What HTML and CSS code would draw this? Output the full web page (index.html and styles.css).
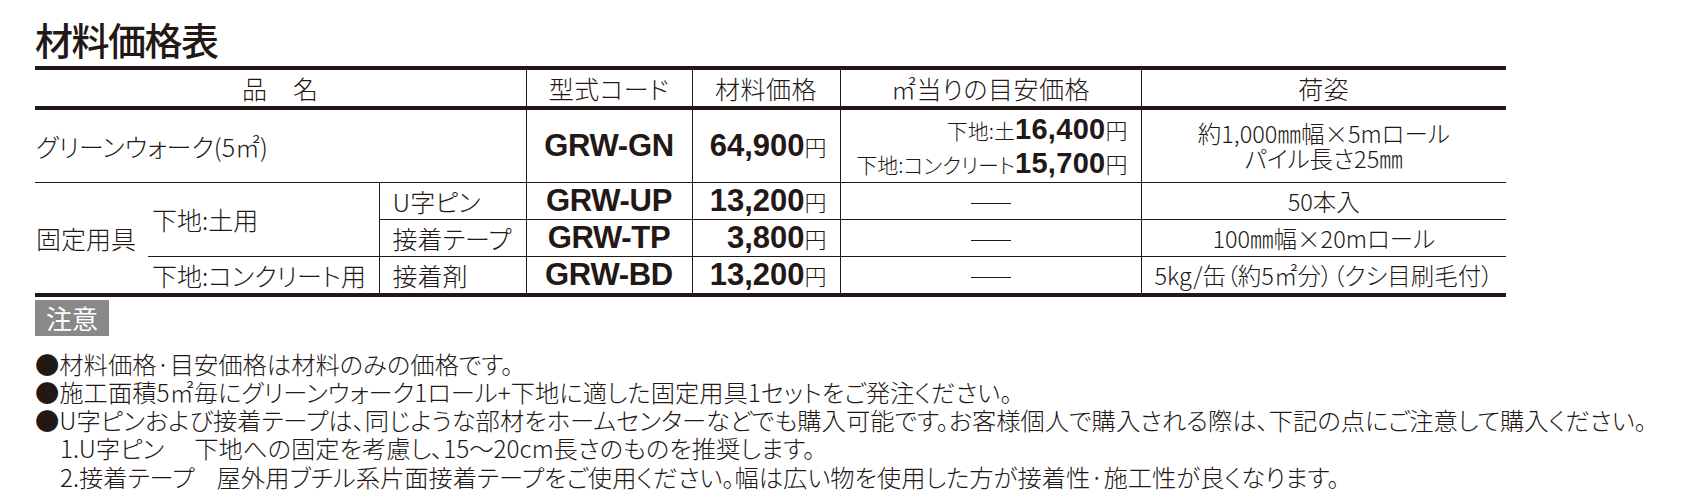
FILE: index.html
```html
<!DOCTYPE html>
<html lang="ja">
<head>
<meta charset="utf-8">
<title>材料価格表</title>
<link rel="stylesheet" href="styles.css">
</head>
<body>
<div class="page">
  <h1 class="title">材料価格表</h1>
  <table class="price">
    <colgroup>
      <col class="c1"><col class="c2"><col class="c3"><col class="c4"><col class="c5"><col class="c6"><col class="c7">
    </colgroup>
    <thead>
      <tr class="hrow">
        <th colspan="3">品　名</th>
        <th class="vl">型式コード</th>
        <th class="vl">材料価格</th>
        <th class="vl">㎡当りの目安価格</th>
        <th class="vl">荷姿</th>
      </tr>
    </thead>
    <tbody>
      <tr class="r1">
        <td colspan="3" class="name">グリーンウォーク(5㎡)</td>
        <td class="vl code">GRW-GN</td>
        <td class="vl cost"><span class="num">64,900</span><span class="yen">円</span></td>
        <td class="vl unit">
          <div class="uline">下地:土<span class="unum">16,400</span><span class="yen">円</span></div>
          <div class="uline">下地:コンクリート<span class="unum">15,700</span><span class="yen">円</span></div>
        </td>
        <td class="vl pack"><div class="pline">約1,000㎜幅×5mロール</div><div class="pline">パイル長さ25㎜</div></td>
      </tr>
      <tr class="r2">
        <td rowspan="3" class="group">固定用具</td>
        <td rowspan="2" class="base">下地:土用</td>
        <td class="vl item">U字ピン</td>
        <td class="vl code">GRW-UP</td>
        <td class="vl cost"><span class="num">13,200</span><span class="yen">円</span></td>
        <td class="vl dash"><span class="bar"></span></td>
        <td class="vl pack">50本入</td>
      </tr>
      <tr class="r3">
        <td class="vl item">接着テープ</td>
        <td class="vl code">GRW-TP</td>
        <td class="vl cost"><span class="num">3,800</span><span class="yen">円</span></td>
        <td class="vl dash"><span class="bar"></span></td>
        <td class="vl pack">100㎜幅×20mロール</td>
      </tr>
      <tr class="r4">
        <td class="base">下地:コンクリート用</td>
        <td class="vl item">接着剤</td>
        <td class="vl code">GRW-BD</td>
        <td class="vl cost"><span class="num">13,200</span><span class="yen">円</span></td>
        <td class="vl dash"><span class="bar"></span></td>
        <td class="vl pack">5kg/缶（約5㎡分）（クシ目刷毛付）</td>
      </tr>
    </tbody>
  </table>
  <div class="badge">注意</div>
  <ul class="notes">
    <li>●材料価格·目安価格は材料のみの価格です。</li>
    <li>●施工面積5㎡毎にグリーンウォーク1ロール+下地に適した固定用具1セットをご発注ください。</li>
    <li>●U字ピンおよび接着テープは、同じような部材をホームセンターなどでも購入可能です。お客様個人で購入される際は、下記の点にご注意して購入ください。</li>
    <li class="sub">1.U字ピン<span class="gap1"></span>下地への固定を考慮し、15～20cm長さのものを推奨します。</li>
    <li class="sub">2.接着テープ<span class="gap2"></span>屋外用ブチル系片面接着テープをご使用ください。幅は広い物を使用した方が接着性·施工性が良くなります。</li>
  </ul>
</div>
</body>
</html>
```
FILE: styles.css
```css
* { box-sizing: border-box; }
html, body { margin: 0; padding: 0; background: #ffffff; }
body {
  font-family: "Noto Sans CJK JP", "Noto Sans", sans-serif;
  color: #231815;
}
.page {
  width: 1706px;
  height: 504px;
  overflow: hidden;
  padding-left: 35px;
}
.title {
  margin: 0;
  padding-top: 18px;
  height: 66px;
  font-size: 38px;
  line-height: 42px;
  font-weight: 500;
  letter-spacing: -1.5px;
}
.price {
  border-collapse: collapse;
  table-layout: fixed;
  width: 1471px;
  font-feature-settings: "palt";
  font-weight: 300;
}
col.c1 { width: 113px; }
col.c2 { width: 231px; }
col.c3 { width: 147px; }
col.c4 { width: 166px; }
col.c5 { width: 148px; }
col.c6 { width: 301px; }
col.c7 { width: 365px; }

.price th, .price td {
  padding: 0;
  vertical-align: middle;
  white-space: nowrap;
}
.price th {
  font-size: 25px;
  font-weight: 300;
  text-align: center;
  border-top: 4px solid #231815;
  border-bottom: 4px solid #231815;
  letter-spacing: 0.5px;
}
.price .vl { border-left: 1px solid #231815; }
.hrow { height: 38px; }
.r1 { height: 74px; }
.r2 { height: 37px; }
.r3 { height: 37px; }
.r4 { height: 35px; }
.price .r1 td { border-bottom: 1px solid #231815; }
.price .r2 td.item, .price .r2 td.code, .price .r2 td.cost, .price .r2 td.dash, .price .r2 td.pack,
.price .r3 td, .price .r2 td.base { border-bottom: 1px solid #231815; }
.price .r4 td, .price .r2 td.group { border-bottom: 4px solid #231815; }

.price td.name, .price td.group, .price td.base, .price td.item {
  font-size: 25px;
  text-align: left;
}
.price td.name { padding-left: 1px; }
.price td.group { padding-left: 1px; }
.price td.base { padding-left: 4px; }
.price td.item { padding-left: 13px; }

.price td.code {
  font-family: "Liberation Sans", Arial, sans-serif;
  font-weight: 700;
  font-size: 31px;
  text-align: center;
  letter-spacing: -0.3px;
}
.price td.cost {
  text-align: right;
  padding-right: 13px;
}
.num {
  font-family: "Liberation Sans", Arial, sans-serif;
  font-weight: 700;
  font-size: 31px;
}
.yen {
  font-size: 22px;
  font-weight: 300;
}
.price td.unit {
  text-align: right;
  padding-right: 13px;
  font-size: 21px;
}
.uline { line-height: 34px; height: 34px; }
.unum {
  font-family: "Liberation Sans", Arial, sans-serif;
  font-weight: 700;
  font-size: 29px;
  letter-spacing: 0.3px;
}
.price td.dash { text-align: center; }
.bar {
  display: inline-block;
  width: 40px;
  height: 0;
  border-top: 1px solid #231815;
  vertical-align: middle;
}
.price td.pack {
  text-align: center;
  font-size: 23.5px;
}
.pline { height: 25px; line-height: 25px; }

.badge {
  margin-top: 3px;
  width: 74px;
  height: 36px;
  background: #898989;
  color: #ffffff;
  font-size: 26px;
  line-height: 36px;
  text-align: center;
  font-weight: 400;
}
.notes {
  list-style: none;
  margin: 14px 0 0;
  padding: 0;
  font-size: 24.3px;
  line-height: 28.3px;
  font-weight: 300;
  font-feature-settings: "palt";
  white-space: nowrap;
}
.notes li { height: 28.3px; }
.sub { padding-left: 25px; }
.gap1 { display: inline-block; width: 30px; }
.gap2 { display: inline-block; width: 22px; }
```
